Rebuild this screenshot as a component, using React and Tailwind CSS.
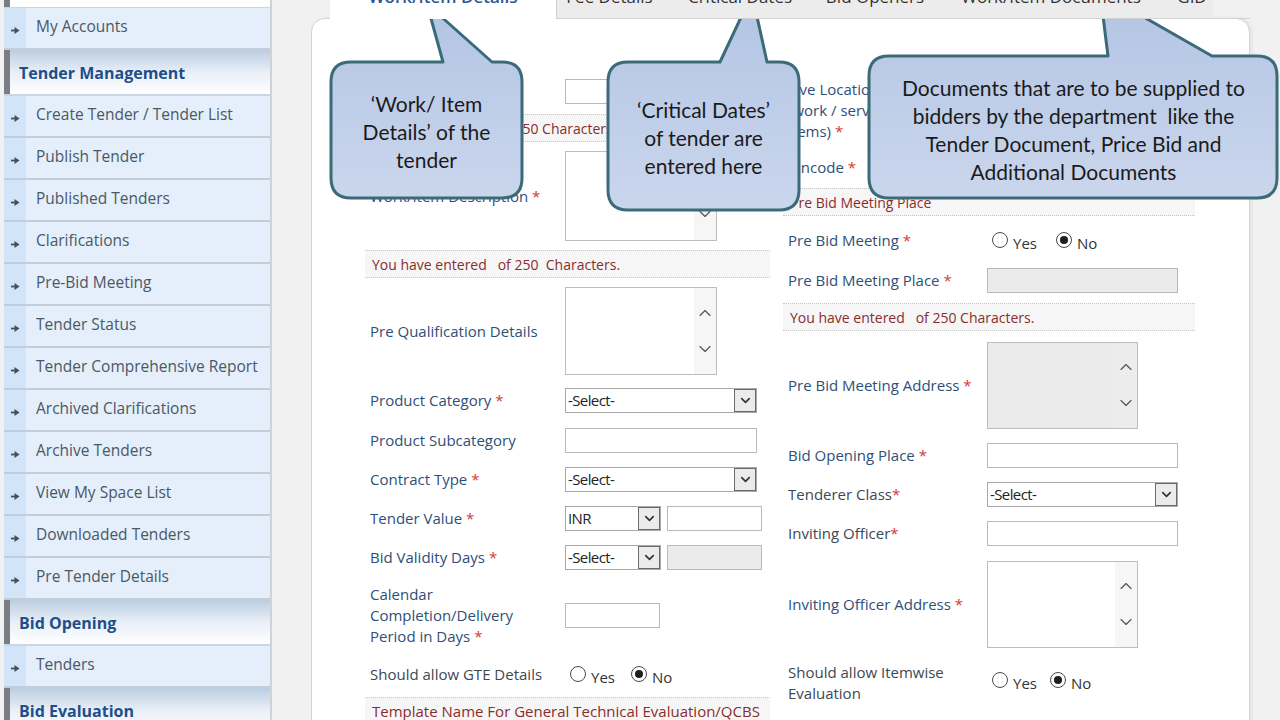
import { ChevronDown, ChevronUp } from 'lucide-react';

const menu = [
  'Create Tender / Tender List',
  'Publish Tender',
  'Published Tenders',
  'Clarifications',
  'Pre-Bid Meeting',
  'Tender Status',
  'Tender Comprehensive Report',
  'Archived Clarifications',
  'Archive Tenders',
  'View My Space List',
  'Downloaded Tenders',
  'Pre Tender Details',
];

const tabs = [
  { label: 'Work/Item Details', w: 'w-[227px]', active: true },
  { label: 'Fee Details', w: 'w-[105px]' },
  { label: 'Critical Dates', w: 'w-[156px]' },
  { label: 'Bid Openers', w: 'w-[114px]' },
  { label: 'Work/Item Documents', w: 'w-[238px]' },
  { label: 'GID', w: 'w-[44px]' },
];

function Arrow() {
  return (
    <svg width="9" height="9" viewBox="0 0 9 9">
      <path d="M0 4.5 H5" stroke="#4b4f55" strokeWidth="1.8" />
      <path d="M3.5 1 L8.5 4.5 L3.5 8 Z" fill="#4b4f55" />
    </svg>
  );
}

function NavItem({ label }) {
  return (
    <div className="shrink-0 flex h-[42px] border-b-2 border-[#c3ced9]">
      <div className="w-[22px] bg-[#d2e4f7] flex justify-center pt-[18px]">
        <Arrow />
      </div>
      <div className="flex-1 bg-[#e4effb] pl-[10px] pt-[7px] text-[15.5px] leading-[22px] text-[#4b5865]">
        {label}
      </div>
    </div>
  );
}

function NavHeader({ label }) {
  return (
    <div className="shrink-0 flex h-[46px] bg-gradient-to-b from-[#bccde0] via-[#e8eff7] to-white border-b-2 border-[#c8d6e6]">
      <div className="w-[6px] bg-[#7a7e84]" />
      <div className="pl-[9px] pt-[2px] flex items-center font-bold text-[16px] text-[#1c4f8b]">{label}</div>
    </div>
  );
}

function Sidebar() {
  return (
    <aside className="ml-[4px] w-[268px] shrink-0 border-r-2 border-[#cfd3d8] flex flex-col">
      <div className="shrink-0 flex h-[8px] bg-white border-b border-[#c8d6e6]">
        <div className="w-[6px] bg-[#7a7e84]" />
      </div>
      <NavItem label="My Accounts" />
      <NavHeader label="Tender Management" />
      {menu.map((m) => (
        <NavItem key={m} label={m} />
      ))}
      <NavHeader label="Bid Opening" />
      <NavItem label="Tenders" />
      <NavHeader label="Bid Evaluation" />
    </aside>
  );
}

function Label({ text, req, tight, dark, w = 'w-[200px]' }) {
  return (
    <div className={`${w} shrink-0 pl-[5px] text-[15px] leading-[21px] ${dark ? 'text-[#3c4855]' : 'text-[#2f4f7a]'}`}>
      {text}
      {req && <span className="text-[#d23a2e]">{tight ? '*' : ' *'}</span>}
    </div>
  );
}

function Input({ w, disabled }) {
  return (
    <div className={`${w} h-[25px] border border-[#b9b9b9] ${disabled ? 'bg-[#ebebeb]' : 'bg-white'}`} />
  );
}

function Select({ value, w }) {
  return (
    <div className={`${w} h-[25px] flex border border-[#a9a9a9] bg-white`}>
      <span className="flex-1 pl-[2px] text-[15px] leading-[23px] tracking-[-0.6px] text-[#222]">{value}</span>
      <span className="w-[22px] h-[23px] border border-[#6a6a6a] bg-[#ebebeb] flex items-center justify-center">
        <ChevronDown size={15} strokeWidth={2.6} color="#333" />
      </span>
    </div>
  );
}

function TextArea({ w, h, disabled }) {
  return (
    <div className={`${w} ${h} flex border border-[#bdbdbd] ${disabled ? 'bg-[#ebebeb]' : 'bg-white'}`}>
      <div className="flex-1" />
      <div className={`w-[22px] flex flex-col items-center justify-center gap-[16px] ${disabled ? 'bg-[#ececec]' : 'bg-[#f6f6f6]'}`}>
        <ChevronUp size={20} strokeWidth={1.4} color="#555" />
        <ChevronDown size={20} strokeWidth={1.4} color="#555" />
      </div>
    </div>
  );
}

function Radio({ checked, label }) {
  return (
    <span className="flex items-center gap-[5px]">
      <span className="w-[16px] h-[16px] rounded-full border border-[#4a4a4a] bg-white flex items-center justify-center">
        {checked && <span className="w-[8px] h-[8px] rounded-full bg-[#1e1e1e]" />}
      </span>
      <span className="mt-[5px] text-[15px] leading-[20px] text-[#333]">{label}</span>
    </span>
  );
}

function Note({ text, className = '' }) {
  return (
    <div
      className={`shrink-0 h-[28px] flex items-center pl-[7px] bg-[#f6f6f6] border-y border-dotted border-[#c6c6c6] text-[14px] text-[#8a2d2d] whitespace-pre ${className}`}
    >
      {text}
    </div>
  );
}

function Row({ h, children }) {
  return <div className={`${h} shrink-0 flex items-center`}>{children}</div>;
}

function LeftColumn() {
  return (
    <div className="w-[405px] flex flex-col pt-[53px]">
      <Row h="h-[38px]">
        <Label text="Work/Item Title" req />
        <Input w="w-[192px]" />
      </Row>
      <Note text="You have entered   of 250 Characters." className="my-[4px]" />
      <Row h="h-[100px]">
        <Label text="Work/Item Description" req />
        <TextArea w="w-[152px]" h="h-[90px]" />
      </Row>
      <Note text="You have entered   of 250  Characters." className="my-[4px]" />
      <Row h="h-[98px]">
        <Label text="Pre Qualification Details" />
        <TextArea w="w-[152px]" h="h-[88px]" />
      </Row>
      <Row h="h-[40px]">
        <Label text="Product Category" req />
        <Select value="-Select-" w="w-[192px]" />
      </Row>
      <Row h="h-[40px]">
        <Label text="Product Subcategory" />
        <Input w="w-[192px]" />
      </Row>
      <Row h="h-[38px]">
        <Label text="Contract Type" req />
        <Select value="-Select-" w="w-[192px]" />
      </Row>
      <Row h="h-[40px]">
        <Label text="Tender Value" req />
        <Select value="INR" w="w-[96px]" />
        <div className="ml-[6px]">
          <Input w="w-[95px]" />
        </div>
      </Row>
      <Row h="h-[39px]">
        <Label text="Bid Validity Days" req />
        <Select value="-Select-" w="w-[96px]" />
        <div className="ml-[6px]">
          <Input w="w-[95px]" disabled />
        </div>
      </Row>
      <Row h="h-[77px]">
        <Label text="Calendar Completion/Delivery Period in Days" req w="w-[200px] pr-[45px]" />
        <Input w="w-[95px]" />
      </Row>
      <Row h="h-[40px]">
        <Label text="Should allow GTE Details" dark />
        <div className="flex items-center gap-[16px] pl-[5px]">
          <Radio label="Yes" />
          <Radio checked label="No" />
        </div>
      </Row>
      <Note text="Template Name For General Technical Evaluation/QCBS" className="mt-[3px] text-[15px]" />
    </div>
  );
}

function RightColumn() {
  return (
    <div className="w-[412px] flex flex-col pt-[51px]">
      <Row h="h-[80px]">
        <Label
          text={
            <>
              Live Location
              <br />
              (work / services /
              <br />
              items)
            </>
          }
          req
          w="w-[204px]"
        />
        <Input w="w-[191px]" />
      </Row>
      <Row h="h-[34px]">
        <Label text="Pincode" req w="w-[204px]" />
        <Input w="w-[191px]" />
      </Row>
      <Note text="Pre Bid Meeting Place" className="my-[4px]" />
      <Row h="h-[40px]">
        <Label text="Pre Bid Meeting" req w="w-[204px]" />
        <div className="flex items-center gap-[19px] pl-[5px]">
          <Radio label="Yes" />
          <Radio checked label="No" />
        </div>
      </Row>
      <Row h="h-[40px]">
        <Label text="Pre Bid Meeting Place" req w="w-[204px]" />
        <Input w="w-[191px]" disabled />
      </Row>
      <Note text="You have entered   of 250 Characters." className="my-[3px]" />
      <Row h="h-[102px]">
        <Label text="Pre Bid Meeting Address" req w="w-[204px]" />
        <TextArea w="w-[151px]" h="h-[87px]" disabled />
      </Row>
      <Row h="h-[38px]">
        <Label text="Bid Opening Place" req w="w-[204px]" />
        <Input w="w-[191px]" />
      </Row>
      <Row h="h-[40px]">
        <Label text="Tenderer Class" req tight dark w="w-[204px]" />
        <Select value="-Select-" w="w-[191px]" />
      </Row>
      <Row h="h-[38px]">
        <Label text="Inviting Officer" req tight dark w="w-[204px]" />
        <Input w="w-[191px]" />
      </Row>
      <Row h="h-[104px]">
        <Label text="Inviting Officer Address" req w="w-[204px]" />
        <TextArea w="w-[151px]" h="h-[87px]" />
      </Row>
      <Row h="h-[54px]">
        <Label text="Should allow Itemwise Evaluation" dark w="w-[204px] pr-[30px]" />
        <div className="flex items-center gap-[13px] pl-[5px] -mt-[6px]">
          <Radio label="Yes" />
          <Radio checked label="No" />
        </div>
      </Row>
    </div>
  );
}

function Tabs() {
  return (
    <div className="relative z-10 -mt-[13px] h-[32px] -mb-px flex pl-[19px]">
      {tabs.map((t) =>
        t.active ? (
          <div
            key={t.label}
            className={`${t.w} h-[32px] bg-white border-r border-[#d0d0d0] rounded-tr-[16px] text-center text-[17px] leading-[20px] font-semibold text-[#2a5693]`}
          >
            {t.label}
          </div>
        ) : (
          <div
            key={t.label}
            className={`${t.w} h-[32px] bg-[#ececec] border-b border-[#d2d2d2] text-center text-[17px] leading-[20px] text-[#333]`}
          >
            {t.label}
          </div>
        )
      )}
      <div className="flex-1 h-[32px] border-b border-[#d2d2d2]" />
    </div>
  );
}

// speech bubble outline: rounded box with a pointer going up to the tab
function bubble(x1, y1, x2, y2, b1, b2, tx, ty, r = 20) {
  return `M${x1 + r} ${y1} L${b1} ${y1} L${tx} ${ty} L${b2} ${y1} L${x2 - r} ${y1} Q${x2} ${y1} ${x2} ${y1 + r} L${x2} ${y2 - r} Q${x2} ${y2} ${x2 - r} ${y2} L${x1 + r} ${y2} Q${x1} ${y2} ${x1} ${y2 - r} L${x1} ${y1 + r} Q${x1} ${y1} ${x1 + r} ${y1} Z`;
}

function Callouts() {
  const notes = [
    { left: 'left-[331px]', top: 'top-[90px]', w: 'w-[191px]', lines: ['‘Work/ Item', 'Details’ of the', 'tender'] },
    { left: 'left-[608px]', top: 'top-[96px]', w: 'w-[191px]', lines: ['‘Critical Dates’', 'of tender are', 'entered here'] },
    {
      left: 'left-[869px]',
      top: 'top-[74px]',
      w: 'w-[409px]',
      lines: [
        'Documents that are to be supplied to',
        'bidders by the department  like the',
        'Tender Document, Price Bid and',
        'Additional Documents',
      ],
    },
  ];
  return (
    <>
      <svg className="absolute inset-0 pointer-events-none" width="1280" height="720">
        <defs>
          <linearGradient id="bubbleFill" x1="0" y1="0" x2="0" y2="1">
            <stop offset="0" stopColor="#b2c4e4" />
            <stop offset="1" stopColor="#cad6ec" />
          </linearGradient>
        </defs>
        <g fill="url(#bubbleFill)" stroke="#3b6b78" strokeWidth="3" strokeLinejoin="round">
          <path d={bubble(331, 62, 522, 198, 443, 492, 427, 4)} />
          <path d={bubble(608, 62, 799, 210, 720, 767, 752, -6)} />
          <path d={bubble(869, 56, 1277, 198, 1108, 1212, 1100, -8)} />
        </g>
      </svg>
      {notes.map((n, i) => (
        <div
          key={i}
          className={`absolute ${n.left} ${n.top} ${n.w} text-center font-['Lato',sans-serif] text-[21px] leading-[28px] text-[#1b1b1b] whitespace-pre`}
        >
          {n.lines.map((l) => (
            <div key={l}>{l}</div>
          ))}
        </div>
      ))}
    </>
  );
}

export default function App() {
  return (
    <div className="relative w-[1280px] h-[720px] overflow-hidden bg-[#f1f1f1] font-['Open_Sans',sans-serif] flex">
      <Sidebar />
      <main className="ml-[39px] w-[939px] flex flex-col">
        <Tabs />
        <div className="flex-1 bg-white border border-[#d4d4d4] rounded-tl-[14px] rounded-tr-[14px] shadow-[2px_0_4px_rgba(0,0,0,0.06)] flex gap-[13px] pl-[53px]">
          <LeftColumn />
          <RightColumn />
        </div>
      </main>
      <Callouts />
    </div>
  );
}
